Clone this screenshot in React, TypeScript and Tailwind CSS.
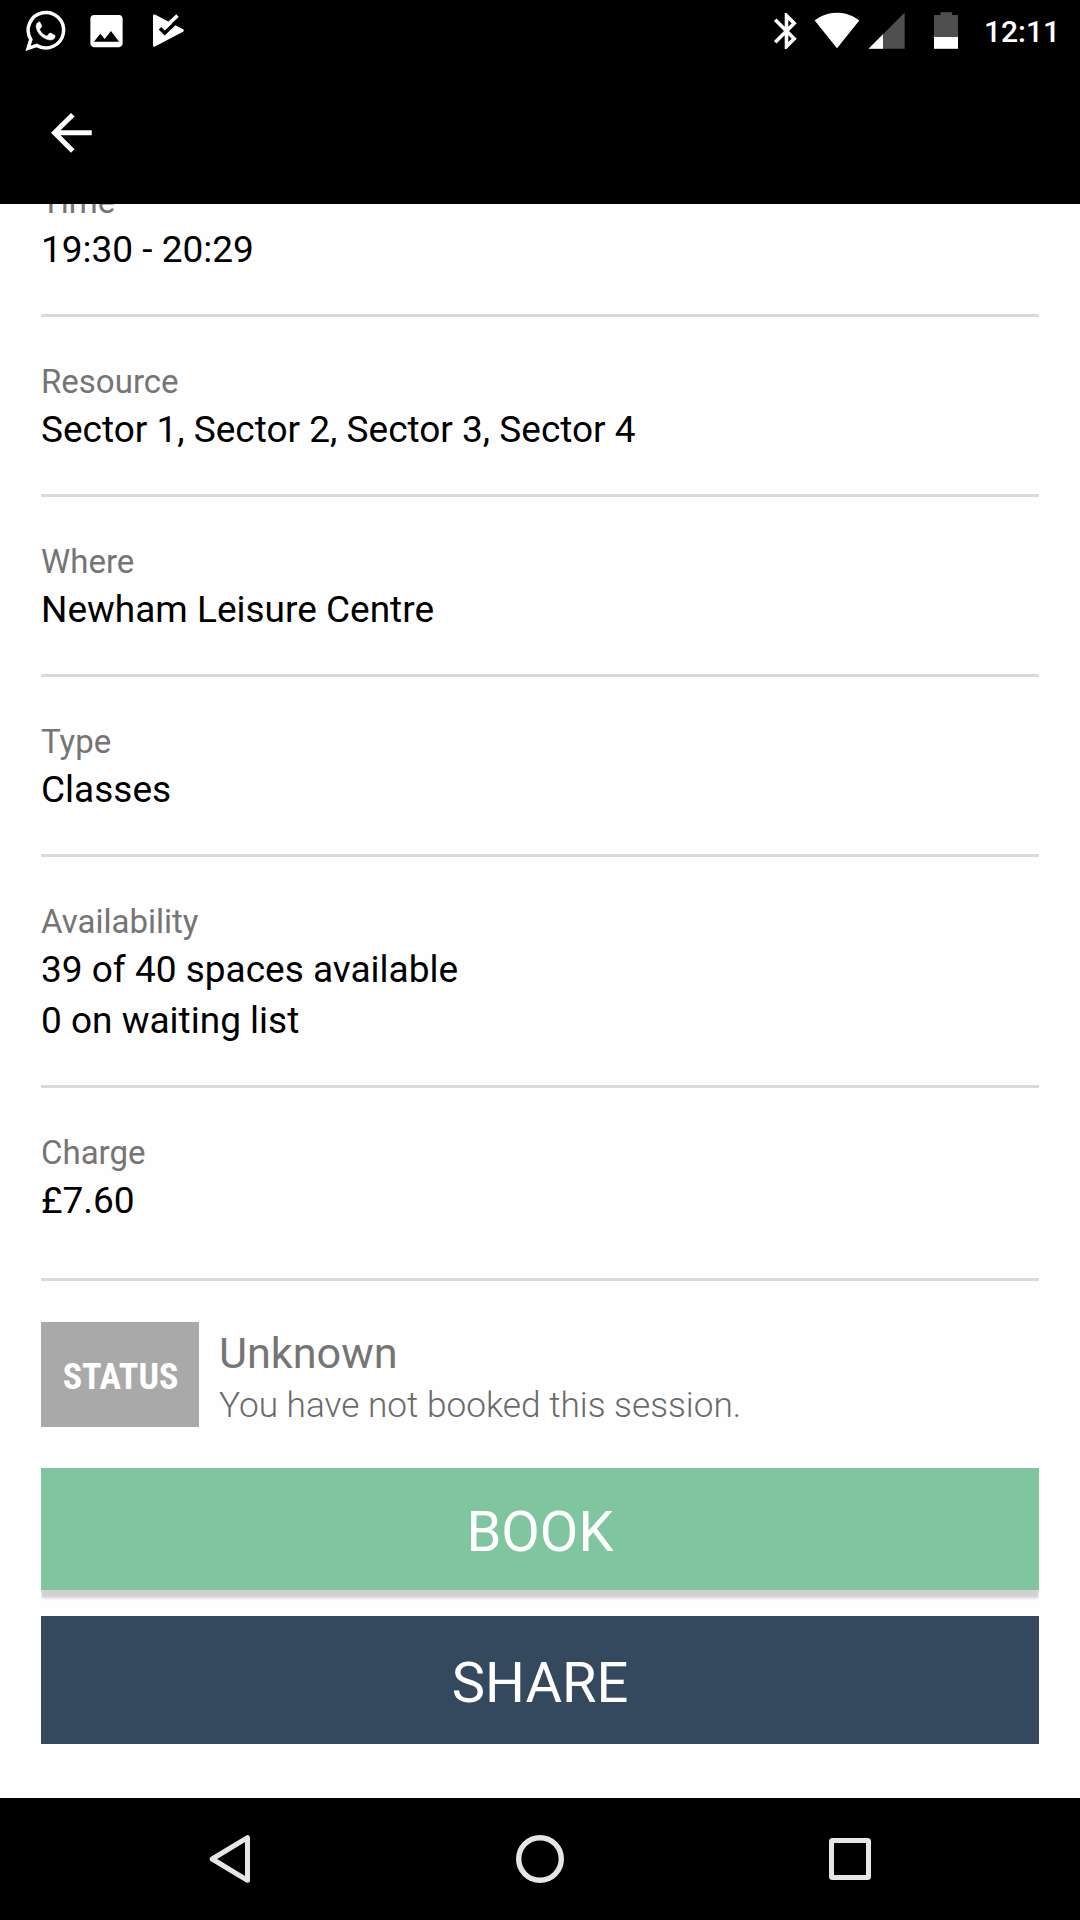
import React from "react";

type Detail = { label: string; lines: string[]; className?: string };

const details: Detail[] = [
  { label: "Time", lines: ["19:30 - 20:29"], className: "-mt-[67px] pb-[39px]" },
  { label: "Resource", lines: ["Sector 1, Sector 2, Sector 3, Sector 4"] },
  { label: "Where", lines: ["Newham Leisure Centre"] },
  { label: "Type", lines: ["Classes"] },
  { label: "Availability", lines: ["39 of 40 spaces available", "0 on waiting list"] },
  { label: "Charge", lines: ["£7.60"], className: "pb-[52px]" },
];

function StatusBar() {
  return (
    <div className="flex h-16 items-center text-white">
      <svg className="ml-[22px] h-16 w-12" viewBox="22 0 48 64" fill="none">
        <path
          d="M28.1 48.3 L30.8 39.4 A17.7 17.7 0 1 1 36.9 45.4 Z"
          stroke="white"
          strokeWidth="3.5"
        />
        <path
          d="M39.5 21.8c-2.5.5-3.6 2.6-3.4 5 .8 6.5 7 12.6 14 13.3 2.6.2 4.9-1.3 5.1-3.8 0-.9-.5-1.2-4.6-3.2-.7-.3-1.1-.1-1.5.4l-1.7 2.1c-.4.4-.8.5-1.4.2-2.8-1.3-4.7-3.2-6.1-5.8-.3-.6-.2-.9.2-1.3l1.4-1.8c.3-.5.3-.8.1-1.3l-1.6-3.6c-.2-.4-.4-.3-.5-.2z"
          fill="white"
          stroke="white"
          strokeWidth="0.4"
        />
      </svg>
      <svg className="ml-[15px] h-[43px] w-[43px] -translate-y-[1.5px]" viewBox="0 0 24 24" fill="white">
        <path d="M21 19V5c0-1.1-.9-2-2-2H5c-1.1 0-2 .9-2 2v14c0 1.1.9 2 2 2h14c1.1 0 2-.9 2-2zM8.500 13.500l2.500 3.010L14.500 12l4.500 6H5l3.500-4.500z" />
      </svg>
      <svg className="ml-[22px] h-16 w-10" viewBox="150 0 40 64" fill="none">
        <path d="M154.300 15.700 L182.500 30.500 L154.300 45.300 Z" fill="white" stroke="white" strokeWidth="2.600" strokeLinejoin="round" />
        <path d="M160 28.200 L164.700 33 L180 18.500" stroke="black" strokeWidth="3.600" />
        <path d="M163.800 28.300 L177.500 15.600" stroke="white" strokeWidth="3.600" />
      </svg>

      <svg className="ml-auto h-[43px] w-[43px] -translate-y-[1.5px]" viewBox="0 0 24 24" fill="white">
        <path d="M17.710 7.710L12 2h-1v7.590L6.410 5 5 6.410 10.590 12 5 17.590 6.410 19 11 14.410V22h1l5.710-5.710-4.300-4.290 4.300-4.290zM13 5.830l1.880 1.880L13 9.590V5.830zm1.880 10.460L13 18.170v-3.760l1.880 1.880z" />
      </svg>
      <svg className="ml-[6px] h-[46px] w-[46px] -translate-y-[2px]" viewBox="0 0 24 24" fill="white">
        <path d="M12.010 21.490L23.640 7c-.45-.34-4.930-4-11.640-4C5.280 3 .81 6.660.36 7l11.630 14.490.01.01.01-.01z" />
      </svg>
      <svg className="ml-[6px] h-16 w-[42px]" viewBox="866 0 42 64">
        <path d="M868.500 48.700 L904.700 48.700 L904.700 12.500 Z" fill="#4f4f4f" />
        <path d="M868.500 48.700 L883 48.700 L883 34.200 Z" fill="white" />
      </svg>
      <svg className="ml-[22px] h-16 w-8" viewBox="930 0 32 64">
        <path d="M934 15H940.500V12.300H952V15H958V38H934Z" fill="#4f4f4f" />
        <path d="M934 37H958V48.800H934Z" fill="white" />
      </svg>
      <span className="mr-[20px] mb-[2px] ml-[22px] w-[76px] text-[30px] leading-[35px] font-medium">12:11</span>
    </div>
  );
}

function DetailRow({ label, lines, className = "pb-[39px]" }: Detail) {
  return (
    <section className={`border-b-[3px] border-[#d9d9d9] pt-[43px] ${className}`}>
      <h2 className="mb-px text-[33px] leading-[43px] text-[#757575]">{label}</h2>
      {lines.map((line) => (
        <p key={line} className="text-[37px] leading-[51px] text-black">
          {line}
        </p>
      ))}
    </section>
  );
}

export default function App() {
  return (
    <div className="flex h-[1920px] w-[1080px] flex-col overflow-hidden bg-[#fefefe] font-['Roboto',sans-serif]">
      <header className="h-[204px] shrink-0 bg-black">
        <StatusBar />
        <button className="mt-[39px] ml-[41px] block" aria-label="Back">
          <svg className="h-[60px] w-[60px]" viewBox="0 0 24 24" fill="white">
            <path d="M20.300 10.900H7.830l5.590-5.490L12 4l-8 7.900 8 8 1.410-1.410L7.830 12.900H20.300v-2z" />
          </svg>
        </button>
      </header>

      <main className="flow-root flex-1 overflow-hidden px-[41px]">
        {details.map((d) => (
          <DetailRow key={d.label} {...d} />
        ))}

        <div className="mt-[41px] flex h-[105px]">
          <div className="flex w-[158px] items-center justify-center bg-[#a9a9a9] pt-1 pl-px text-[36px] font-bold text-white [font-stretch:75%]">
            STATUS
          </div>
          <div className="pt-1 pl-5 text-[#757575]">
            <p className="text-[43.2px] leading-[56px]">Unknown</p>
            <p className="text-[35.2px] leading-[46px] font-light text-[#6a6a6a]">You have not booked this session.</p>
          </div>
        </div>

        <button className="mt-[41px] flex h-[122px] w-full items-center justify-center bg-[#7fc6a0] pt-[6px] text-[56px] text-white shadow-[0_8px_3px_0_#d3ced0] [clip-path:inset(0_0_-12px_0)]">
          BOOK
        </button>
        <button className="mt-[26px] flex h-32 w-full items-center justify-center bg-[#34495e] pt-[6px] text-[56px] text-white">
          SHARE
        </button>
      </main>

      <nav className="flex h-[122px] shrink-0 items-center justify-between bg-black px-[205px]">
        <svg className="h-[60px] w-[50px]" viewBox="205 1829 50 60" fill="none" stroke="#e6e6e6" strokeWidth="5" strokeLinejoin="round">
          <path d="M247.500 1837.700 V1880.300 L212.200 1859 Z" />
        </svg>
        <svg className="h-[60px] w-[60px]" viewBox="510 1829 60 60" fill="none" stroke="#e6e6e6" strokeWidth="5.400">
          <circle cx="540" cy="1859" r="21.300" />
        </svg>
        <svg className="h-[60px] w-[50px]" viewBox="825 1829 50 60" fill="none" stroke="#e6e6e6" strokeWidth="5" strokeLinejoin="round">
          <rect x="831.500" y="1840.500" width="37" height="37" rx="1" />
        </svg>
      </nav>
    </div>
  );
}
